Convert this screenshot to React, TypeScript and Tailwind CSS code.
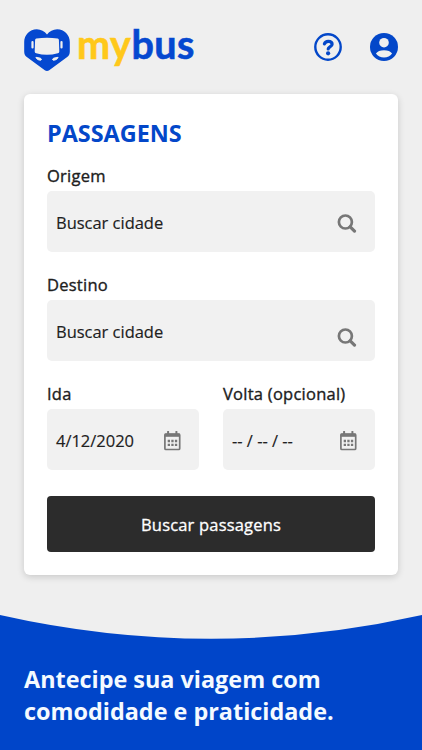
const label = "block h-[28px] whitespace-nowrap text-[16.500px] leading-[26px] tracking-[0.250px] [-webkit-text-stroke:0.350px_#202020]";
const field = "flex h-[61px] items-center justify-between rounded-[5px] bg-[#f1f1f1] pl-[9px] pr-[18px] pt-[3px] text-[16.500px] tracking-[-0.020px] [-webkit-text-stroke:0.150px_#202020]";

function Logo() {
  return (
    <div className="flex items-start" aria-label="mybus">
      <svg width="46" height="44" viewBox="0 0 46 44" className="mt-[28px] shrink-0">
        <path
          d="M23 6.500C20.500 3.300 17 1.200 12.800 1.200 5.700 1.200 .2 6.900 .2 14V23.500C.2 26 1 27.600 2.800 29L20.800 42.200C22.200 43.300 23.800 43.300 25.200 42.200L43.200 29C45 27.600 45.800 26 45.800 23.500V14C45.800 6.900 40.300 1.200 33.200 1.200 29 1.200 25.500 3.300 23 6.500Z"
          fill="#0548d0"
        />
        <path
          d="M12.300 10.500Q23 9 33.700 10.500Q34.800 10.700 34.900 12L35.300 23.400Q35.300 25 33.800 25.300Q23 28.400 12.200 25.300Q10.700 25 10.700 23.400L11.100 12Q11.200 10.700 12.300 10.500Z"
          fill="#efefef"
        />
        <path
          d="M8.500 14V19.500M37.500 14V19.500"
          fill="none"
          stroke="#efefef"
          strokeWidth="2.200"
          strokeLinecap="round"
        />
        <path
          d="M11.900 29.300L16.500 30.200Q18.300 32 16.700 32.200C14.300 32.100 12.500 31.300 11.900 29.300ZM34.100 29.300L29.500 30.200Q27.700 32 29.300 32.200C31.700 32.100 33.500 31.300 34.100 29.300Z"
          fill="#efefef"
          stroke="#efefef"
          strokeLinejoin="round"
        />
      </svg>
      <span className="ml-[7px] mt-[22px] font-['Lato',sans-serif] text-[39.500px] font-bold leading-[44px] tracking-[0.500px] text-[#ffc81a] [-webkit-text-stroke:0.600px_#ffc81a]">
        my<span className="text-[#0548d0] [-webkit-text-stroke:0.600px_#0548d0]">bus</span>
      </span>
    </div>
  );
}

function HelpIcon() {
  return (
    <svg width="28" height="28" viewBox="0 0 28 28" fill="none" stroke="#0347c9">
      <circle cx="14" cy="14" r="12.700" strokeWidth="2.400" />
      <path
        d="M10.400 10.900C11 9.200 12.300 8.300 14.200 8.300 16.500 8.300 18.100 9.400 18.100 11.200 18.100 13.900 14.200 13.900 14.200 16"
        strokeWidth="3.200"
        strokeLinecap="round"
      />
      <circle cx="14.100" cy="20.300" r="2.100" fill="#0347c9" stroke="none" />
    </svg>
  );
}

function AccountIcon() {
  return (
    <svg width="28" height="28" viewBox="0 0 28 28">
      <circle cx="14" cy="14" r="14" fill="#0347c9" />
      <circle cx="14" cy="9.700" r="4.800" fill="#efefef" />
      <path d="M5.900 20.600C7.200 18.400 10.400 17.200 14 17.200S20.800 18.400 22.100 20.600C20.200 23.300 17.400 24.600 14 24.600S7.800 23.300 5.900 20.600Z" fill="#efefef" />
    </svg>
  );
}

function SearchIcon() {
  return (
    <svg width="20" height="20" viewBox="0 0 20 20" fill="none" stroke="#777">
      <circle cx="8.400" cy="9" r="6.500" strokeWidth="2.700" />
      <path d="M13.200 13.800L17.500 18.100" strokeWidth="3.200" strokeLinecap="round" />
    </svg>
  );
}

function CalendarIcon() {
  return (
    <svg width="18" height="20" viewBox="0 0 18 20" fill="none" stroke="#777">
      <rect x="1.900" y="3" width="14.800" height="15.500" rx="1" strokeWidth="1.700" />
      <path d="M1.700 4.200H16.900" strokeWidth="3.200" />
      <path d="M5.100 3.500V.7M13.400 3.500V.7" strokeWidth="2" strokeLinecap="round" />
      <path d="M4.700 10H14.200M4.700 13.800H14.200" strokeWidth="2.300" strokeDasharray="2.300 1.300" />
    </svg>
  );
}

export default function App() {
  return (
    <div className="flex h-[750px] w-[422px] flex-col overflow-hidden bg-[#efefef] font-['Open_Sans',sans-serif] text-[#202020]">
      <header className="flex h-[94px] shrink-0 items-start justify-between px-[24px]">
        <Logo />
        <div className="mt-[33px] flex gap-[28px]">
          <HelpIcon />
          <AccountIcon />
        </div>
      </header>

      <main className="mx-[24px] h-[481px] shrink-0 rounded-[6px] bg-white px-[23px] pt-[24px] shadow-[0_2px_7px_rgba(0,0,0,0.16)]">
        <h1 className="h-[45px] text-[23.400px] font-bold leading-[31px] text-[#0347c9]">PASSAGENS</h1>

        <label className={label}>Origem</label>
        <div className={field}>
          <span>Buscar cidade</span>
          <SearchIcon />
        </div>

        <label className={`mt-[20px] ${label}`}>Destino</label>
        <div className={field}>
          <span>Buscar cidade</span>
          <span className="mt-[10px]">
            <SearchIcon />
          </span>
        </div>

        <div className="mt-[20px] grid grid-cols-2 gap-[24px]">
          <div>
            <label className={label}>Ida</label>
            <div className={field}>
              <span>4/12/2020</span>
              <CalendarIcon />
            </div>
          </div>
          <div>
            <label className={label}>Volta (opcional)</label>
            <div className={field}>
              <span>-- / -- / --</span>
              <CalendarIcon />
            </div>
          </div>
        </div>

        <button className="mt-[25.500px] h-[56.500px] w-full rounded-[4px] bg-[#2c2c2c] pt-[3px] text-[16.500px] tracking-[0.180px] text-white [-webkit-text-stroke:0.300px_white]">
          Buscar passagens
        </button>
      </main>

      <footer className="mt-[40px] flex grow flex-col bg-[#0045c9]">
        <svg width="422" height="24" viewBox="0 0 422 24" className="shrink-0">
          <path d="M0 0Q211 47.500 422 0Z" fill="#efefef" />
        </svg>
        <p className="ml-[24px] mt-[25px] text-[23.400px] font-bold leading-[31.500px] text-[#f4faff]">
          Antecipe sua viagem com
          <br />
          comodidade e praticidade.
        </p>
      </footer>
    </div>
  );
}
